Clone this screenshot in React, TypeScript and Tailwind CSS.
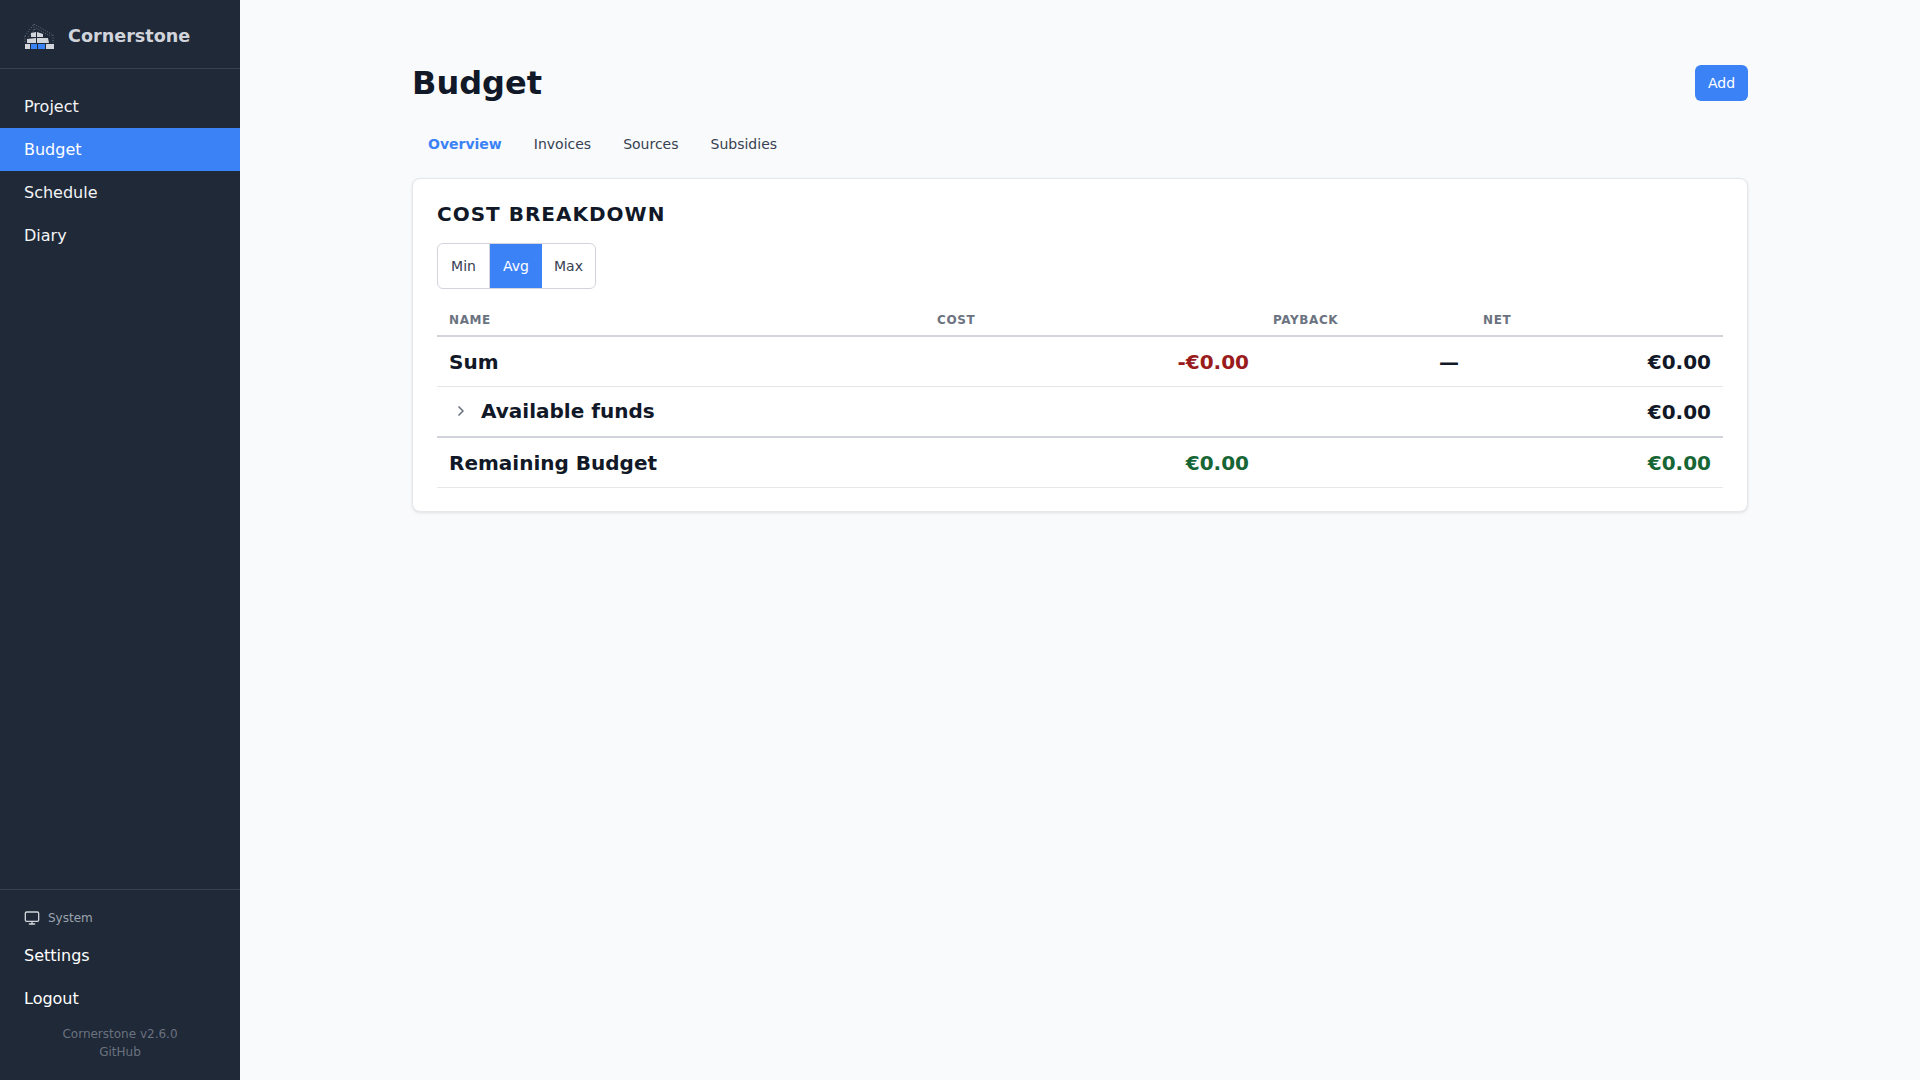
import { Monitor, ChevronRight } from "lucide-react";

const font = { fontFamily: "'DejaVu Sans', sans-serif" };

function Logo() {
  return (
    <svg width="32" height="28" viewBox="0 0 32 28" className="shrink-0">
      <g fill="none" stroke="#6b7280" strokeWidth="1" strokeDasharray="1 1.5">
        <path d="M1 14 L10 2 L29 13" />
        <path d="M4 15 L12 6 L26 14" />
        <path d="M10 2 V9" />
        <path d="M1 14 V21" />
        <path d="M29 13 V21" />
      </g>
      <g fill="#d1d5db">
        <path d="M7 11 L12 10 V15 H7 Z" />
        <path d="M13 10 L19 12 V15 H13 Z" />
        <path d="M3 17 L12 16 V21 H3 Z" />
        <path d="M13 16 H24 L25 21 H13 Z" />
        <rect x="1" y="22" width="5" height="5" />
        <rect x="22" y="22" width="8" height="5" />
      </g>
      <rect x="7" y="22" width="14" height="5" fill="#3b82f6" />
      <path d="M13.5 22 V27" stroke="#1f2937" strokeWidth="1" />
    </svg>
  );
}

const nav = ["Project", "Budget", "Schedule", "Diary"];
const tabs = ["Overview", "Invoices", "Sources", "Subsidies"];

function Sidebar() {
  return (
    <aside className="flex h-screen w-[240px] shrink-0 flex-col bg-[#1f2937]">
      <div className="flex h-[69px] items-center gap-[12px] border-b border-[#374151] pl-[24px] pt-[4px]">
        <Logo />
        <span className="text-[17.6px] font-bold text-[#d1d5db]">Cornerstone</span>
      </div>
      <nav className="flex flex-1 flex-col pt-[16px]">
        {nav.map((n) => (
          <a
            key={n}
            className={`flex h-[43px] items-center px-[24px] text-[16px] ${
              n === "Budget" ? "bg-[#3b82f6] text-white" : "text-[#f3f4f6]"
            }`}
          >
            {n}
          </a>
        ))}
      </nav>
      <div className="border-t border-[#374151] pb-[19px] pt-[16px]">
        <div className="flex h-[24px] items-center gap-[8px] px-[24px] text-[12px] text-[#9ca3af]">
          <Monitor size={16} className="text-[#d1d5db]" />
          System
        </div>
        <a className="mt-[4px] flex h-[43px] items-center px-[24px] text-[16px] text-white">
          Settings
        </a>
        <a className="flex h-[43px] items-center px-[24px] text-[16px] text-white">Logout</a>
        <div className="mt-[5px] text-center text-[12px] leading-[18px] text-[#6b7280]">
          <div>Cornerstone v2.6.0</div>
          <div>GitHub</div>
        </div>
      </div>
    </aside>
  );
}

function Segments() {
  return (
    <div className="mt-[17px] inline-flex h-[46px] overflow-hidden rounded-[6px] border border-[#d1d5db] align-top text-[14px] text-[#374151]">
      <span className="flex w-[52px] items-center justify-center border-r border-[#d1d5db]">Min</span>
      <span className="flex w-[52px] items-center justify-center bg-[#3b82f6] text-white">Avg</span>
      <span className="flex w-[53px] items-center justify-center">Max</span>
    </div>
  );
}

function Table() {
  const th = "px-[12px] pb-[6px] pt-[8px] text-left text-[12px] font-bold uppercase tracking-[0.6px] text-[#6b7280]";
  const cell = "px-[12px] text-[20px] font-bold leading-[30px]";
  const td = `${cell} pb-[9px] pt-[10px]`;
  return (
    <table className="mt-[14px] w-full table-fixed border-collapse text-[#111827]">
      <colgroup>
        <col className="w-[488px]" />
        <col className="w-[336px]" />
        <col className="w-[210px]" />
        <col />
      </colgroup>
      <thead>
        <tr className="border-b-2 border-[#d1d5db]">
          <th className={th}>Name</th>
          <th className={th}>Cost</th>
          <th className={th}>Payback</th>
          <th className={th}>Net</th>
        </tr>
      </thead>
      <tbody>
        <tr className="border-b border-[#e5e7eb]">
          <td className={td}>Sum</td>
          <td className={`${td} text-right text-[#991b1b]`}>-€0.00</td>
          <td className={`${td} text-right`}>—</td>
          <td className={`${td} text-right`}>€0.00</td>
        </tr>
        <tr className="border-b-2 border-[#d1d5db]">
          <td className={`${cell} pb-[10px] pt-[9px]`}>
            <span className="flex items-center gap-[12px] pl-[4px]">
              <ChevronRight size={16} strokeWidth={2.5} className="text-[#6b7280]" />
              Available funds
            </span>
          </td>
          <td className={td} />
          <td className={td} />
          <td className={`${td} text-right`}>€0.00</td>
        </tr>
        <tr className="border-b border-[#e5e7eb]">
          <td className={td}>Remaining Budget</td>
          <td className={`${td} text-right text-[#166534]`}>€0.00</td>
          <td className={td} />
          <td className={`${td} text-right text-[#166534]`}>€0.00</td>
        </tr>
      </tbody>
    </table>
  );
}

export default function App() {
  return (
    <div className="flex h-screen overflow-hidden bg-[#f9fafb]" style={font}>
      <Sidebar />
      <main className="flex-1 px-[172px] pt-[57px]">
        <div className="flex items-start justify-between">
          <h1 className="text-[32px] font-bold leading-[52px] text-[#111827]">Budget</h1>
          <button className="mt-[8px] h-[36px] w-[53px] rounded-[6px] bg-[#3b82f6] text-[14px] text-white">
            Add
          </button>
        </div>
        <div className="mt-[25px] flex gap-[32px] px-[16px] text-[14px] leading-[21px] text-[#374151]">
          {tabs.map((t) => (
            <span key={t} className={t === "Overview" ? "font-bold text-[#3b82f6]" : ""}>
              {t}
            </span>
          ))}
        </div>
        <section className="mt-[23px] rounded-[8px] border border-[#e5e7eb] bg-white px-[24px] pb-[23px] pt-[23px] shadow-[0_1px_3px_rgba(0,0,0,0.1)]">
          <h2 className="text-[20px] font-bold uppercase leading-[24px] tracking-[1px] text-[#111827]">
            Cost Breakdown
          </h2>
          <Segments />
          <Table />
        </section>
      </main>
    </div>
  );
}
